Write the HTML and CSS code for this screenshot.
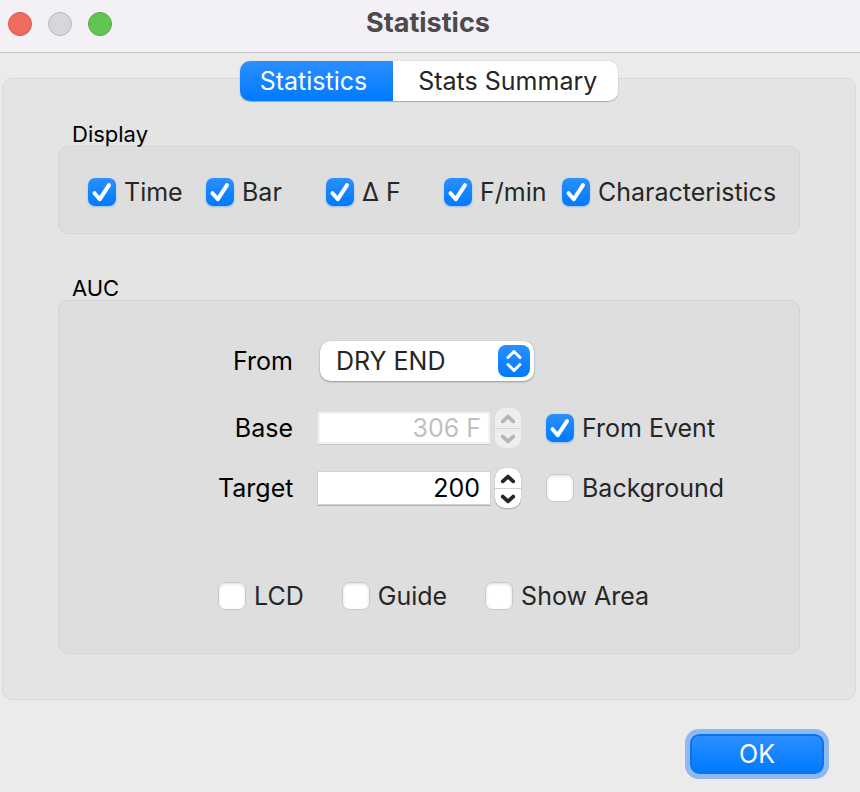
FILE: index.html
```html
<!DOCTYPE html>
<html lang="en">
<head>
<meta charset="utf-8">
<meta name="viewport" content="width=device-width, initial-scale=1">
<title>Statistics</title>
<link rel="stylesheet" href="styles.css">
</head>
<body>
<svg class="defs" aria-hidden="true">
  <symbol id="tick" viewBox="0 0 28 28"><path d="M6.5 15.2 11.8 21.2 21 7.2"/></symbol>
  <symbol id="up" viewBox="0 0 26 20"><path d="M7.5 13 13 8l5.5 5"/></symbol>
  <symbol id="down" viewBox="0 0 26 20"><path d="M7.5 8 13 13l5.5-5"/></symbol>
</svg>
<header class="titlebar">
  <div class="lights">
    <button class="light close" aria-label="Close"></button>
    <button class="light minimize" aria-label="Minimize" disabled></button>
    <button class="light expand" aria-label="Zoom"></button>
  </div>
  <h1 class="title">Statistics</h1>
</header>
<main class="content">
  <div class="tabs" role="tablist">
    <button class="tab active" role="tab" aria-selected="true">Statistics</button>
    <button class="tab" role="tab" aria-selected="false">Stats Summary</button>
  </div>
  <section class="panel">
    <h2 class="group-title">Display</h2>
    <div class="group display">
      <label class="check"><span class="box"><input type="checkbox" checked><svg><use href="#tick"/></svg></span>Time</label>
      <label class="check"><span class="box"><input type="checkbox" checked><svg><use href="#tick"/></svg></span>Bar</label>
      <label class="check"><span class="box"><input type="checkbox" checked><svg><use href="#tick"/></svg></span>∆ F</label>
      <label class="check"><span class="box"><input type="checkbox" checked><svg><use href="#tick"/></svg></span>F/min</label>
      <label class="check"><span class="box"><input type="checkbox" checked><svg><use href="#tick"/></svg></span>Characteristics</label>
    </div>
    <h2 class="group-title">AUC</h2>
    <div class="group auc">
      <div class="row from-row">
        <label class="name" for="from">From</label>
        <div class="popup">
          <select id="from"><option>DRY END</option></select>
          <svg class="badge" viewBox="0 0 32 32" aria-hidden="true"><path d="M10 12.5 16 6.5l6 6M10 19.5l6 6 6-6"/></svg>
        </div>
      </div>
      <div class="row">
        <label class="name" for="base">Base</label>
        <input class="field" id="base" type="text" value="306 F" disabled>
        <div class="stepper">
          <button aria-label="Increase base" disabled><svg><use href="#up"/></svg></button>
          <button aria-label="Decrease base" disabled><svg><use href="#down"/></svg></button>
        </div>
        <label class="check"><span class="box"><input type="checkbox" checked><svg><use href="#tick"/></svg></span>From Event</label>
      </div>
      <div class="row">
        <label class="name" for="target">Target</label>
        <input class="field" id="target" type="text" inputmode="numeric" value="200">
        <div class="stepper">
          <button aria-label="Increase target"><svg><use href="#up"/></svg></button>
          <button aria-label="Decrease target"><svg><use href="#down"/></svg></button>
        </div>
        <label class="check"><span class="box"><input type="checkbox"><svg><use href="#tick"/></svg></span>Background</label>
      </div>
      <div class="options">
        <label class="check"><span class="box"><input type="checkbox"><svg><use href="#tick"/></svg></span>LCD</label>
        <label class="check"><span class="box"><input type="checkbox"><svg><use href="#tick"/></svg></span>Guide</label>
        <label class="check"><span class="box"><input type="checkbox"><svg><use href="#tick"/></svg></span>Show Area</label>
      </div>
    </div>
  </section>
</main>
<footer class="actions">
  <button class="ok">OK</button>
</footer>
</body>
</html>
```
FILE: styles.css
```css
* {
  box-sizing: border-box;
}

:root {
  --blue: linear-gradient(#2b8fff, #007aff);
}

body {
  margin: 0;
  min-height: 100vh;
  background: #ebebeb;
  color: #000;
  font: 25px/32px Inter, sans-serif;
}

button,
input,
select {
  margin: 0;
  padding: 0;
  border: 0;
  font: inherit;
  color: inherit;
}

svg {
  display: block;
  fill: none;
  stroke: currentColor;
  stroke-linecap: round;
  stroke-linejoin: round;
}

.defs {
  display: none;
}

.titlebar {
  display: grid;
  grid-template-columns: 1fr auto 1fr;
  align-items: start;
  height: 53px;
  padding: 7px 8px;
  background: #f3f0f6;
  border-bottom: 1px solid #c6c3c6;
}

.lights {
  display: flex;
  gap: 16px;
  padding-top: 5px;
}

.light {
  width: 24px;
  height: 24px;
  border: 1px solid #d6584d;
  border-radius: 50%;
  background: #ed6b5f;
}

.light.minimize {
  border-color: #b9b7bc;
  background: #d8d6db;
}

.light.expand {
  border-color: #52a842;
  background: #61c554;
}

.title {
  margin: 0;
  padding-right: 4px;
  color: #4b4a4d;
  font-size: 27px;
  font-weight: 700;
}

.content {
  padding: 8px 4px 0 2px;
}

.tabs {
  position: relative;
  display: flex;
  width: fit-content;
  margin: 0 auto;
  border-radius: 10px;
  background: #fff;
  box-shadow: 0 0 1px rgba(0, 0, 0, 0.3), 0 1px 1px rgba(0, 0, 0, 0.25);
}

.tab {
  height: 40px;
  padding: 0 21px 0 25px;
  border-radius: 0 10px 10px 0;
  background: #fff;
  color: #262626;
}

.tab.active {
  padding: 0 26px 0 20px;
  border-radius: 10px 0 0 10px;
  background: var(--blue);
  color: #fff;
}

.panel {
  margin-top: -23px;
  padding: 43px 55px 45px;
  border: 1px solid #d9d9d9;
  border-radius: 10px;
  background: #e4e4e4;
}

.group-title {
  margin: 0;
  padding: 0 14px;
  font-size: 22px;
  font-weight: 400;
  line-height: 24px;
}

.group {
  border: 1px solid #d3d3d3;
  border-radius: 10px;
  background: #dedede;
}

.display {
  display: grid;
  grid-template-columns: 118px 120px 118px 118px auto;
  margin-bottom: 42px;
  padding: 29px 0 25px 29px;
}

.check {
  display: flex;
  align-items: center;
  gap: 8px;
  color: #262626;
  white-space: nowrap;
}

.box {
  display: grid;
}

.box > * {
  grid-area: 1 / 1;
  width: 28px;
  height: 28px;
}

.box input {
  appearance: none;
  border: 1px solid #cacaca;
  border-radius: 7px;
  background: #fff;
  box-shadow: inset 0 1px 3px rgba(0, 0, 0, 0.15);
}

.box input:checked {
  border: 0;
  background: var(--blue);
  box-shadow: 0 1px 2px rgba(0, 122, 255, 0.35);
}

.box svg {
  visibility: hidden;
  color: #fff;
  stroke-width: 4px;
  pointer-events: none;
}

.box input:checked + svg {
  visibility: visible;
}

.auc {
  padding: 40px 0 41px 159px;
}

.row {
  display: flex;
  align-items: center;
  margin-bottom: 20px;
}

.from-row {
  margin-bottom: 27px;
}

.name {
  width: 75px;
  margin-right: 25px;
  text-align: right;
}

.popup {
  display: grid;
  width: 214px;
  margin-left: 2px;
}

.popup > * {
  grid-area: 1 / 1;
}

.popup select {
  appearance: none;
  height: 40px;
  padding: 0 40px 0 16px;
  border-radius: 10px;
  background: #fff;
  box-shadow: 0 0 1px rgba(0, 0, 0, 0.3), 0 1px 2px rgba(0, 0, 0, 0.3);
  color: #262626;
}

.badge {
  place-self: center end;
  width: 32px;
  height: 32px;
  margin-right: 4px;
  border-radius: 8px;
  background: var(--blue);
  color: #fff;
  stroke-width: 3px;
  pointer-events: none;
}

.field {
  width: 172px;
  height: 32px;
  padding: 0 10px;
  background: #fff;
  box-shadow: 0 0 0 1px #d2d2d2, 0 1px 0 1px #b4b4b4;
  text-align: right;
}

.field:disabled {
  border: 2px solid #f3f3f3;
  padding: 0 7px;
  box-shadow: 0 1px 0 #c8c8c8;
  color: #bfbfbf;
}

.stepper {
  display: grid;
  width: 26px;
  margin: 0 25px 0 5px;
  border-radius: 10px;
  background: #fff;
  box-shadow: 0 0 1px rgba(0, 0, 0, 0.3), 0 1px 1px rgba(0, 0, 0, 0.2);
}

.stepper button {
  height: 20px;
  background: none;
  color: #262626;
}

.stepper button + button {
  border-top: 1px solid #d4d4d4;
}

.stepper svg {
  width: 26px;
  height: 19px;
  stroke-width: 4px;
}

.stepper:has(:disabled) {
  background: #eee;
  box-shadow: none;
}

.stepper button:disabled {
  color: #b5b5b5;
}

.options {
  display: flex;
  gap: 38px;
  margin-top: 72px;
}

.actions {
  display: flex;
  justify-content: flex-end;
  padding: 34px 36px 18px;
}

.ok {
  width: 134px;
  height: 40px;
  border: 2px solid #0b72f0;
  border-radius: 9px;
  background: var(--blue);
  box-shadow: 0 0 0 5px #8fb8f0;
  color: #fff;
}
```
